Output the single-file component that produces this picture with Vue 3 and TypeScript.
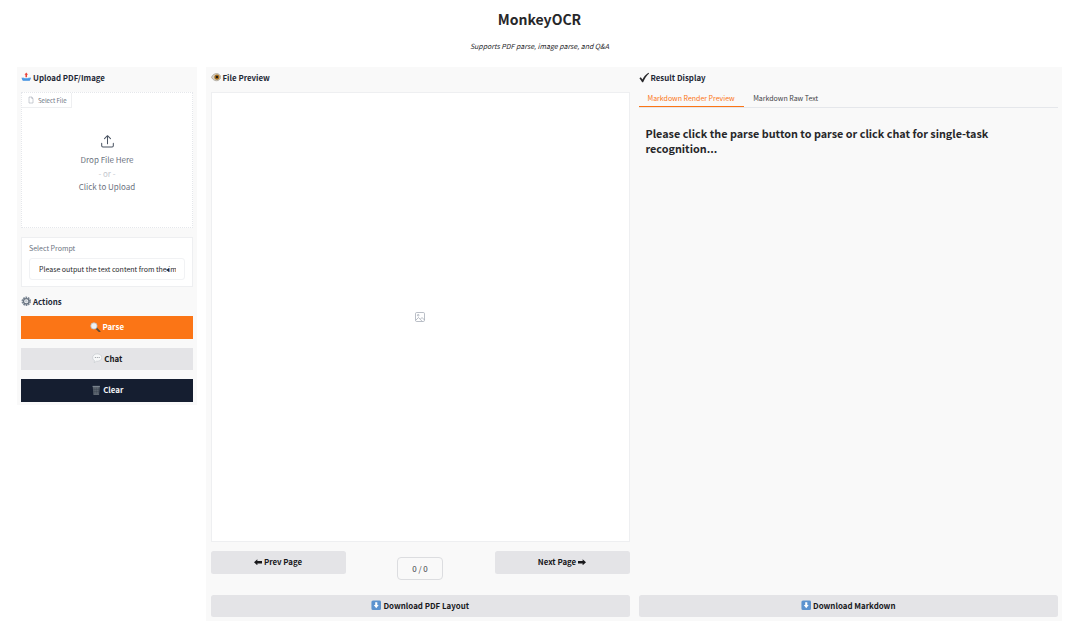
<script setup lang="ts">
const tabs = ["Markdown Render Preview", "Markdown Raw Text"];
</script>

<template>
  <div class="page">
    <header class="head">
      <h1>MonkeyOCR</h1>
      <p>Supports PDF parse, image parse, and Q&amp;A</p>
    </header>

    <div class="layout">
      <aside class="panel side">
        <h3 class="title">
          <svg class="emoji" viewBox="0 0 12 12">
            <path d="M0.500 6.500h3l1 1.500h3l1-1.500h3L10 10H2z" fill="#3b8de0" />
            <path d="M1.500 7h9v1.500h-9z" fill="#5aa6ea" />
            <path d="M6 0.500 8 3H6.900v3H5.100V3H4z" fill="#e8443a" />
          </svg>
          Upload PDF/Image
        </h3>

        <div class="drop">
          <div class="file-tab">
            <svg viewBox="0 0 12 12" fill="none" stroke="#9ca3af" stroke-width="0.800">
              <path d="M3 1.500h4l2 2v7H3zM7 1.500v2h2" />
            </svg>
            Select File
          </div>
          <div class="drop-body">
            <svg class="upload" viewBox="0 0 16 16" fill="none" stroke="#4b5563" stroke-width="1.100" stroke-linecap="round" stroke-linejoin="round">
              <path d="M8 10.500V2M4.800 5 8 1.800 11.200 5M1.800 10v2.500c0 .8.500 1.300 1.300 1.300h9.800c.8 0 1.300-.5 1.300-1.300V10" />
            </svg>
            <span>Drop File Here</span>
            <span class="or">- or -</span>
            <span>Click to Upload</span>
          </div>
        </div>

        <div class="prompt">
          <label>Select Prompt</label>
          <div class="select">
            <span>Please output the text content from the image</span>
            <i class="caret"></i>
          </div>
        </div>

        <h3 class="title actions">
          <svg class="emoji" viewBox="0 0 12 12">
            <circle cx="6" cy="6" r="4.300" fill="none" stroke="#7c8794" stroke-width="2.200" stroke-dasharray="1.800 0.900" />
            <circle cx="6" cy="6" r="3.100" fill="none" stroke="#6b7683" stroke-width="1.500" />
            <circle cx="6" cy="6" r="1.500" fill="#c4cad1" />
          </svg>
          Actions
        </h3>

        <div class="action-list">
          <button class="btn orange">
            <svg class="emoji" viewBox="0 0 12 12">
              <path d="M6.800 6.800l4.200 4.200" stroke="#5f4a36" stroke-width="2" stroke-linecap="round" />
              <circle cx="4.500" cy="4.500" r="3.600" fill="#eef0f3" stroke="#b9c0c8" stroke-width="0.900" />
            </svg>
            Parse
          </button>
          <button class="btn grey">
            <svg class="emoji" viewBox="0 0 12 12">
              <path d="M6 1c3 0 5.200 1.800 5.200 4.200S9 9.400 6 9.400H5L2.500 11l.4-2.300C1.600 8 .8 6.700.8 5.200.8 2.800 3 1 6 1z" fill="#f7f8f9" stroke="#b4b9bf" stroke-width="0.500" />
              <circle cx="3.800" cy="5.200" r="0.600" fill="#7f858c" />
              <circle cx="6" cy="5.200" r="0.600" fill="#7f858c" />
              <circle cx="8.200" cy="5.200" r="0.600" fill="#7f858c" />
            </svg>
            Chat
          </button>
          <button class="btn navy">
            <svg class="emoji" viewBox="0 0 12 12">
              <path d="M2 1.500h8L9.200 11.500H2.800z" fill="#5d6670" />
              <path d="M3.500 3v7M6 3v7M8.500 3v7M2.500 5h7M2.700 7.500h6.600" stroke="#39424d" stroke-width="0.500" />
              <path d="M1.800 1h8.400v1H1.800z" fill="#8a939d" />
            </svg>
            Clear
          </button>
        </div>
      </aside>

      <main class="panel main">
        <section class="col">
          <h3 class="title">
            <svg class="emoji" viewBox="0 0 12 12">
              <path d="M0.500 6C2 3 4 1.800 6.500 1.800S10.500 3.500 11.500 6c-1.200 2.600-3 4-5.200 4S1.800 8.600 0.500 6z" fill="#d9d3c8" stroke="#77705f" stroke-width="0.500" />
              <circle cx="6.800" cy="5.800" r="3" fill="#a9701f" />
              <circle cx="6.800" cy="5.800" r="1.400" fill="#1d1a16" />
            </svg>
            File Preview
          </h3>
          <div class="preview">
            <svg viewBox="0 0 12 12" fill="none" stroke="#9ca3af" stroke-width="0.700" stroke-linejoin="round">
              <rect x="1.500" y="1.500" width="9" height="9" rx="1.200" />
              <circle cx="4.200" cy="4.200" r="0.800" />
              <path d="M1.800 9.200 4.500 6.500l3.500 3.700M6.500 8l1.500-1.500 2.500 2.500" />
            </svg>
          </div>
          <div class="pager">
            <button class="btn grey round">
              <svg class="arrow" viewBox="0 0 9 7"><path d="M0 3.500 3.800 0v2H9v3H3.800v2z" fill="#18181b" /></svg>
              Prev Page
            </button>
            <div class="count">0 / 0</div>
            <button class="btn grey round">
              Next Page
              <svg class="arrow" viewBox="0 0 9 7"><path d="M9 3.500 5.200 0v2H0v3h5.200v2z" fill="#18181b" /></svg>
            </button>
          </div>
          <button class="btn grey round download">
            <svg class="emoji" viewBox="0 0 12 12">
              <rect x="0.500" y="0.500" width="11" height="11" rx="1.800" fill="#5c93cf" />
              <path d="M4.800 2.500h2.400v3.300h1.600L6 9.300 3.200 5.800h1.600z" fill="#fff" />
            </svg>
            Download PDF Layout
          </button>
        </section>

        <section class="col">
          <h3 class="title">
            <svg class="check" viewBox="0 0 12 12"><path d="M0.500 6.800 2 5.800 4 8.300C5.500 5 7.500 2.500 10.800 0.500L11.500 1.300C8.800 3.800 6.500 7 4.700 11.500H3.600C2.700 9.800 1.700 8.200 0.500 6.800z" fill="#27272a" /></svg>
            Result Display
          </h3>
          <nav class="tabs">
            <span v-for="(tab, i) in tabs" :key="tab" class="tab" :class="{ active: i === 0 }">{{ tab }}</span>
          </nav>
          <div class="result">Please click the parse button to parse or click chat for single-task recognition...</div>
          <button class="btn grey round download">
            <svg class="emoji" viewBox="0 0 12 12">
              <rect x="0.500" y="0.500" width="11" height="11" rx="1.800" fill="#5c93cf" />
              <path d="M4.800 2.500h2.400v3.300h1.600L6 9.300 3.200 5.800h1.600z" fill="#fff" />
            </svg>
            Download Markdown
          </button>
        </section>
      </main>
    </div>
  </div>
</template>

<style scoped>
.page {
  height: 644px;
  box-sizing: border-box;
  padding: 0 18px 0 17px;
  font-family: "Noto Sans CJK SC", "Open Sans", sans-serif;
  color: #27272a;
}

.head {
  height: 67px;
  text-align: center;
}

.head h1 {
  margin: 0;
  padding-top: 9px;
  font-size: 14px;
  line-height: 20px;
  font-weight: 700;
}

.head p {
  margin: 0;
  padding-top: 11px;
  font-size: 7px;
  line-height: 12px;
  font-style: italic;
}

.layout {
  display: flex;
  gap: 9px;
  align-items: flex-start;
}

.panel {
  background: #f9f9f9;
}

.side {
  width: 180px;
  height: 338px;
  flex: none;
  box-sizing: border-box;
  padding: 0 4px;
}

.title {
  display: flex;
  align-items: center;
  gap: 1.500px;
  height: 20px;
  margin: 0 0 5px;
  font-size: 7.900px;
  font-weight: 600;
  color: #1f2937;
}

.emoji {
  width: 10.500px;
  height: 10.500px;
  flex: none;
}

.drop {
  height: 136px;
  background: #fff;
  border: 1px dotted #e5e7eb;
  box-sizing: border-box;
  display: flex;
  flex-direction: column;
}

.file-tab {
  align-self: flex-start;
  display: flex;
  align-items: center;
  gap: 3px;
  height: 14px;
  padding: 0 4px 0 5px;
  border-right: 1px solid #eeeff1;
  border-bottom: 1px solid #eeeff1;
  font-size: 6px;
  color: #6b7280;
}

.file-tab svg {
  width: 8px;
  height: 8px;
}

.drop-body {
  flex: 1;
  display: flex;
  flex-direction: column;
  align-items: center;
  padding-top: 26px;
  font-size: 8px;
  line-height: 13.500px;
  color: #6b7280;
}

.upload {
  width: 15px;
  height: 15px;
  margin-bottom: 4px;
}

.or {
  color: #c4c8ce;
}

.prompt {
  margin-top: 9px;
  height: 50px;
  box-sizing: border-box;
  background: #fff;
  border: 1px solid #eeeff1;
  padding: 4px 7px 0;
}

.prompt label {
  display: block;
  font-size: 7px;
  line-height: 12px;
  color: #6b7280;
}

.select {
  position: relative;
  height: 22px;
  margin-top: 4px;
  box-sizing: border-box;
  border: 1px solid #f1f2f4;
  border-radius: 3px;
  padding: 0 8px 0 9px;
  display: flex;
  align-items: center;
  font-size: 7px;
  color: #27272a;
  white-space: nowrap;
  overflow: hidden;
}

.select span {
  overflow: hidden;
}

.caret {
  position: absolute;
  right: 15px;
  top: 9px;
  border: 2px solid transparent;
  border-right: 3px solid #1f2937;
  border-left: 0;
}

.actions {
  margin: 2px 0 0;
  height: 24px;
}

.action-list {
  margin-top: 3px;
  display: flex;
  flex-direction: column;
  gap: 9px;
}

.btn {
  display: flex;
  align-items: center;
  justify-content: center;
  gap: 2px;
  height: 22.500px;
  padding: 0 0 1px;
  border: 0;
  font-family: inherit;
  font-size: 7.900px;
  font-weight: 600;
  color: #18181b;
}

.orange {
  background: #fb7516;
  color: #fff;
}

.grey {
  background: #e4e4e7;
}

.navy {
  background: #151e30;
  color: #f3f4f6;
}

.round {
  border-radius: 2.500px;
}

.main {
  flex: 1;
  height: 554px;
  display: flex;
}

.col {
  flex: 1;
  min-width: 0;
  box-sizing: border-box;
  padding: 0 4.500px 4px;
  display: flex;
  flex-direction: column;
}

.preview {
  height: 450px;
  background: #fff;
  border: 1px solid #eeeff1;
  box-sizing: border-box;
  display: flex;
  align-items: center;
  justify-content: center;
}

.preview svg {
  width: 12px;
  height: 12px;
}

.pager {
  display: grid;
  grid-template-columns: 135px 1fr 135px;
  margin-top: 9px;
  align-items: start;
}

.count {
  justify-self: center;
  margin-top: 6px;
  width: 46px;
  height: 23px;
  box-sizing: border-box;
  border: 1px solid #dcdde0;
  border-radius: 4px;
  text-align: center;
  font-size: 8px;
  line-height: 21px;
  color: #3f3f46;
}

.arrow {
  width: 8px;
  height: 6.500px;
  flex: none;
}

.download {
  margin-top: auto;
  flex: none;
}

.check {
  width: 10.500px;
  height: 11px;
  flex: none;
}

.tabs {
  display: flex;
  height: 16px;
  margin-top: -1px;
  border-bottom: 1px solid #e5e7eb;
}

.tab {
  padding: 0 9.500px 0 9px;
  font-size: 7px;
  line-height: 15px;
  color: #3f3f46;
}

.tab.active {
  height: 15px;
  color: #fb7516;
  border-bottom: 1px solid #fb7516;
}

.result {
  padding: 17.500px 7px 0;
  font-size: 10.800px;
  line-height: 15.500px;
  font-weight: 600;
  color: #27272a;
}
</style>

<style>
html,
body {
  margin: 0;
  background: #fff;
}
</style>
